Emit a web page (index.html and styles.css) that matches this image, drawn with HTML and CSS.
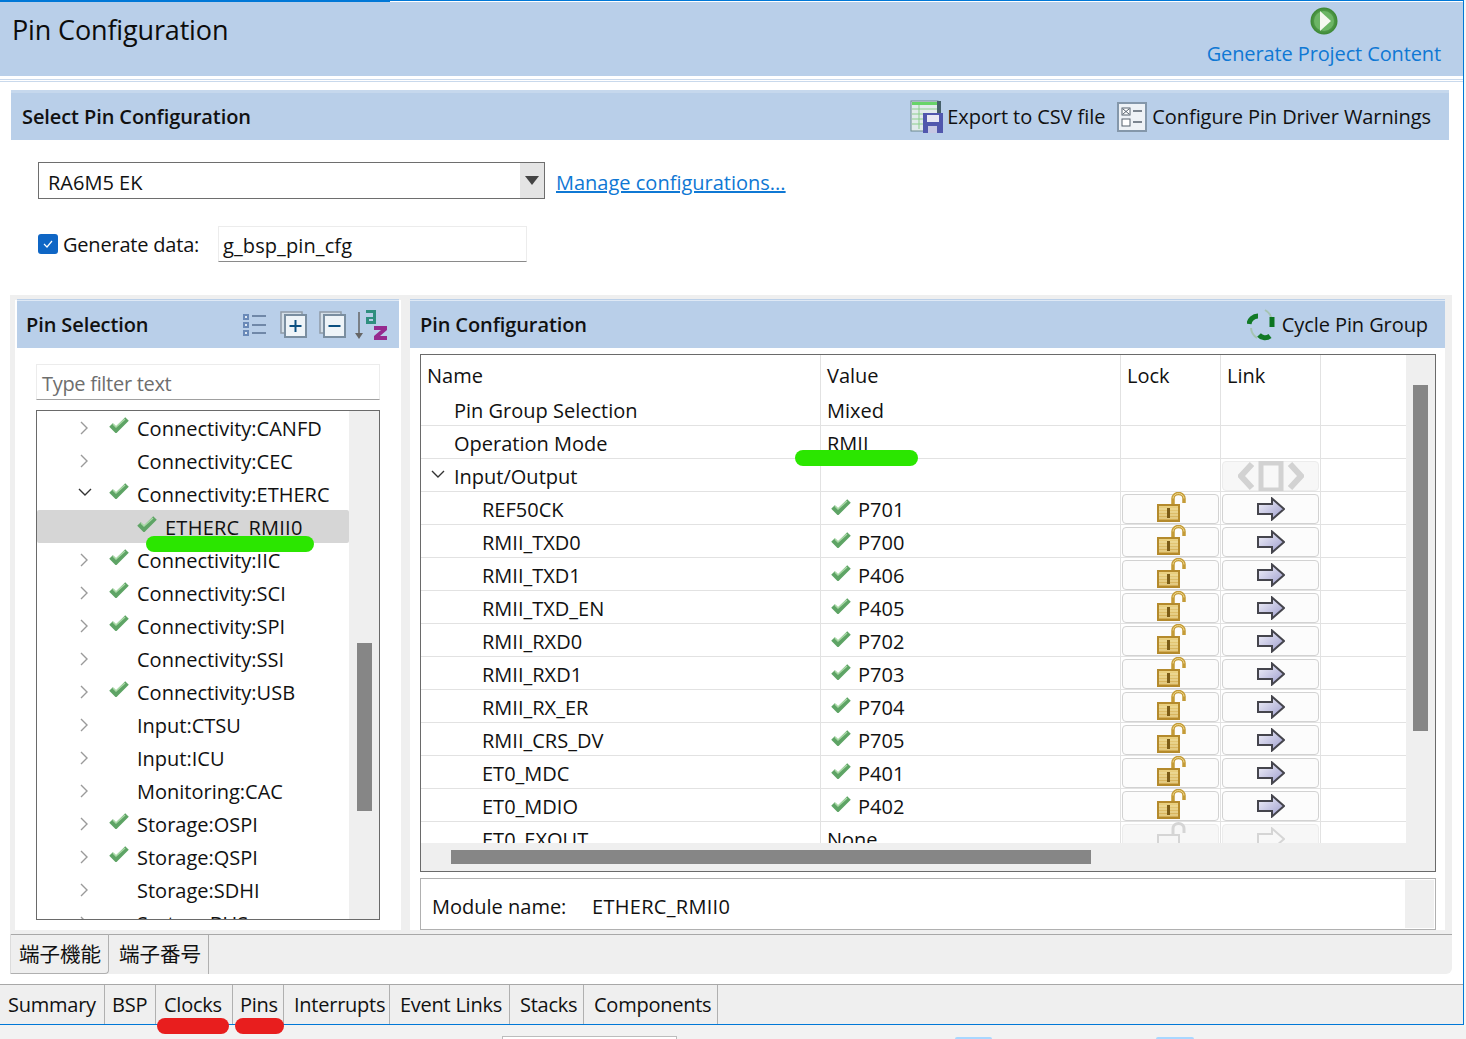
FILE: index.html
```html
<!DOCTYPE html>
<html lang="en">
<head>
<meta charset="utf-8">
<title>Pin Configuration</title>
<link rel="stylesheet" href="styles.css">
</head>
<body>
<svg class="defs" width="0" height="0" aria-hidden="true">
  <defs>
    <linearGradient id="arrowFill" x1="0" y1="0" x2="1" y2="1"><stop offset="0" stop-color="#f4f4fb"/><stop offset="1" stop-color="#9c9ccd"/></linearGradient>
    <linearGradient id="lockFill" x1="0" y1="0" x2="0" y2="1"><stop offset="0" stop-color="#ecd485"/><stop offset="1" stop-color="#d0a950"/></linearGradient>
    <radialGradient id="playFill"><stop offset="0" stop-color="#8ccc84"/><stop offset="1" stop-color="#3b8733"/></radialGradient>
    <symbol id="i-check" viewBox="0 0 20 16"><path d="M2 8l5 5L18 2" fill="none" stroke="#5ea465" stroke-width="5"/><path d="M4 7l3 3 9-8" fill="none" stroke="#a9d9a6" stroke-width="1.500"/></symbol>
    <symbol id="i-right" viewBox="0 0 10 16"><path d="M2 2l6 6-6 6" fill="none" stroke="#9a9a9a" stroke-width="1.400"/></symbol>
    <symbol id="i-down" viewBox="0 0 16 10"><path d="M2 2l6 6 6-6" fill="none" stroke="#333" stroke-width="1.400"/></symbol>
    <symbol id="i-lock" viewBox="0 0 30 30"><path d="M16 13V6.500a5.500 5 0 0 1 11 0V11" fill="none" stroke="#c49b36" stroke-width="3.500"/><path d="M16 6.500a5.500 5 0 0 1 11 0" fill="none" stroke="#efd98f"/><rect x="1" y="13" width="21" height="16" fill="url(#lockFill)" stroke="#b48a2c" stroke-width="2"/><path d="M2 17h19M2 20h19M2 23h19M2 26h19" stroke="#f2e3a8"/><rect x="10" y="16" width="3" height="10" fill="#7b5c16"/></symbol>
    <symbol id="i-arrow" viewBox="0 0 28 24"><path d="M1 7h14V1.500L27 12 15 22.500V17H1z" fill="url(#arrowFill)" stroke="#45454d" stroke-width="2"/></symbol>
    <symbol id="i-lock-off" viewBox="0 0 30 30"><path d="M16 13V6.500a5.500 5 0 0 1 11 0V11" fill="none" stroke="#d5d5d5" stroke-width="3"/><rect x="1" y="13" width="21" height="16" fill="#f6f6f6" stroke="#d5d5d5" stroke-width="2"/></symbol>
    <symbol id="i-arrow-off" viewBox="0 0 28 24"><path d="M1 7h14V1.500L27 12 15 22.500V17H1z" fill="#f8f8f8" stroke="#d5d5d5" stroke-width="2"/></symbol>
  </defs>
</svg>

<div class="window">
  <div class="progress"></div>
  <header class="page-head">
    <h1 class="page-title">Pin Configuration</h1>
    <div class="generate">
      <svg class="play" width="28" height="28" viewBox="0 0 28 28"><circle cx="14" cy="14" r="13.500" fill="url(#playFill)"/><circle cx="14" cy="14" r="10" fill="#6cb565"/><path d="M10 4l11 10-11 10z" fill="#f6f8f0"/></svg>
      <a class="generate-link">Generate Project Content</a>
    </div>
  </header>

  <section class="select-section">
    <div class="bar select-bar">
      <h2 class="bar-title">Select Pin Configuration</h2>
      <div class="bar-actions">
        <span class="action">
          <svg width="33" height="33" viewBox="0 0 33 33"><rect x="1" y="1" width="27" height="30" fill="#e2ebec" stroke="#6d8a90"/><rect x="2" y="2" width="25" height="3" fill="#68d468"/><path d="M2 9h25M2 14h25M2 19h25M2 24h25M9 5v24" stroke="#8ccf8c"/><rect x="27" y="1" width="4" height="13" fill="#46606a"/><rect x="13" y="13" width="20" height="20" fill="#5157ad"/><rect x="17" y="15" width="12" height="7" fill="#e8e8f4"/><rect x="18" y="26" width="9" height="7" fill="#c6c8e4"/></svg>
          Export to CSV file
        </span>
        <span class="action action-wide">
          <svg width="30" height="30" viewBox="0 0 30 30"><rect x="1" y="1" width="28" height="28" fill="#eef2f6" stroke="#8497aa" stroke-width="2"/><rect x="5" y="6" width="8" height="7" fill="#fff" stroke="#55606c"/><path d="M6 7l6 5M12 7l-6 5" stroke="#55606c"/><rect x="5" y="17" width="8" height="7" fill="#fff" stroke="#55606c"/><path d="M16 9h9M16 20h9" stroke="#55606c" stroke-width="1.500"/></svg>
          Configure Pin Driver Warnings
        </span>
      </div>
    </div>
    <div class="config-row">
      <div class="combo"><span class="combo-value">RA6M5 EK</span><span class="combo-btn"><i class="combo-caret"></i></span></div>
      <a class="link">Manage configurations...</a>
    </div>
    <div class="generate-row">
      <span class="checkbox"><svg width="14" height="14" viewBox="0 0 14 14"><path d="M3 7l3 3 5-6" fill="none" stroke="#fff" stroke-width="1.200"/></svg></span>
      <span class="generate-label">Generate data:</span>
      <span class="text-input">g_bsp_pin_cfg</span>
    </div>
  </section>

  <div class="work">
    <div class="panels">
      <section class="panel panel-left">
        <div class="bar panel-bar">
          <h2 class="bar-title">Pin Selection</h2>
          <div class="tools">
            <svg width="24" height="24" viewBox="0 0 24 24"><g fill="#dfe8f2" stroke="#6a8ab8" stroke-width="2"><rect x="1" y="2" width="4" height="4"/><rect x="1" y="10" width="4" height="4"/><rect x="1" y="18" width="4" height="4"/></g><path d="M9 3h14M9 12h14M9 20h14" stroke="#7088a8" stroke-width="2"/></svg>
            <svg width="27" height="27" viewBox="0 0 27 27"><rect x="1" y="1" width="21" height="21" fill="#d4dfe8" stroke="#8e9ba6" stroke-width="1.500"/><rect x="5" y="4" width="21" height="22" fill="#eef4f8" stroke="#7a8ea0" stroke-width="2"/><path d="M15.500 9v12M9.500 15h12" stroke="#0a4f80" stroke-width="2"/></svg>
            <svg class="tool-collapse" width="27" height="27" viewBox="0 0 27 27"><rect x="1" y="1" width="21" height="21" fill="#d4dfe8" stroke="#8e9ba6" stroke-width="1.500"/><rect x="5" y="4" width="21" height="22" fill="#eef4f8" stroke="#7a8ea0" stroke-width="2"/><path d="M9.500 15h12" stroke="#0a4f80" stroke-width="2"/></svg>
            <svg class="tool-sort" width="33" height="32" viewBox="0 0 33 32"><path d="M5 3v24" stroke="#666" stroke-width="1.500"/><path d="M1 24h8l-4 6z" fill="#666"/><path d="M12 1h10v14h-10v-7h7V4h-7zM15 10v2h4v-2z" fill="#2f8f7f" fill-rule="evenodd"/><path d="M20 17h13v4l-7 6h7v4H20v-4l7-6h-7z" fill="#962a8f"/></svg>
          </div>
        </div>
        <div class="filter">Type filter text</div>
        <div class="tree">
          <div class="tree-rows">
            <div class="tree-row"><span class="chev"><svg width="10" height="16"><use href="#i-right"/></svg></span><span class="chk"><svg width="20" height="16"><use href="#i-check"/></svg></span>Connectivity:CANFD</div>
            <div class="tree-row"><span class="chev"><svg width="10" height="16"><use href="#i-right"/></svg></span><span class="chk"></span>Connectivity:CEC</div>
            <div class="tree-row"><span class="chev chev-open"><svg width="16" height="10"><use href="#i-down"/></svg></span><span class="chk"><svg width="20" height="16"><use href="#i-check"/></svg></span>Connectivity:ETHERC</div>
            <div class="tree-row tree-child"><span class="chk"><svg width="20" height="16"><use href="#i-check"/></svg></span>ETHERC_RMII0</div>
            <div class="tree-row"><span class="chev"><svg width="10" height="16"><use href="#i-right"/></svg></span><span class="chk"><svg width="20" height="16"><use href="#i-check"/></svg></span>Connectivity:IIC</div>
            <div class="tree-row"><span class="chev"><svg width="10" height="16"><use href="#i-right"/></svg></span><span class="chk"><svg width="20" height="16"><use href="#i-check"/></svg></span>Connectivity:SCI</div>
            <div class="tree-row"><span class="chev"><svg width="10" height="16"><use href="#i-right"/></svg></span><span class="chk"><svg width="20" height="16"><use href="#i-check"/></svg></span>Connectivity:SPI</div>
            <div class="tree-row"><span class="chev"><svg width="10" height="16"><use href="#i-right"/></svg></span><span class="chk"></span>Connectivity:SSI</div>
            <div class="tree-row"><span class="chev"><svg width="10" height="16"><use href="#i-right"/></svg></span><span class="chk"><svg width="20" height="16"><use href="#i-check"/></svg></span>Connectivity:USB</div>
            <div class="tree-row"><span class="chev"><svg width="10" height="16"><use href="#i-right"/></svg></span><span class="chk"></span>Input:CTSU</div>
            <div class="tree-row"><span class="chev"><svg width="10" height="16"><use href="#i-right"/></svg></span><span class="chk"></span>Input:ICU</div>
            <div class="tree-row"><span class="chev"><svg width="10" height="16"><use href="#i-right"/></svg></span><span class="chk"></span>Monitoring:CAC</div>
            <div class="tree-row"><span class="chev"><svg width="10" height="16"><use href="#i-right"/></svg></span><span class="chk"><svg width="20" height="16"><use href="#i-check"/></svg></span>Storage:OSPI</div>
            <div class="tree-row"><span class="chev"><svg width="10" height="16"><use href="#i-right"/></svg></span><span class="chk"><svg width="20" height="16"><use href="#i-check"/></svg></span>Storage:QSPI</div>
            <div class="tree-row"><span class="chev"><svg width="10" height="16"><use href="#i-right"/></svg></span><span class="chk"></span>Storage:SDHI</div>
            <div class="tree-row"><span class="chev"><svg width="10" height="16"><use href="#i-right"/></svg></span><span class="chk"></span>System:BUS</div>
          </div>
          <div class="vscroll tree-scroll"><i class="thumb tree-thumb"></i></div>
        </div>
      </section>

      <section class="panel panel-right">
        <div class="bar panel-bar panel-bar-right">
          <h2 class="bar-title">Pin Configuration</h2>
          <span class="action">
            <svg width="31" height="32" viewBox="0 0 31 32"><path d="M2 15a9 9 0 0 1 9-8" fill="none" stroke="#127a27" stroke-width="5"/><path d="M18 1a14 14 0 0 1 7 12" fill="none" stroke="#a6c4b2" stroke-width="2"/><path d="M25 8v10" stroke="#0b7420" stroke-width="5"/><path d="M12 26a8 8 0 0 0 11 1" fill="none" stroke="#127a27" stroke-width="5"/><path d="M4 19a13 13 0 0 0 6 10" fill="none" stroke="#a6c4b2" stroke-width="2"/></svg>
            Cycle Pin Group
          </span>
        </div>
        <div class="grid-box">
          <div class="grid-main">
            <div class="grid-rows">
              <div class="row row-head"><div class="cell cell-name">Name</div><div class="cell cell-val">Value</div><div class="cell cell-lock cell-text">Lock</div><div class="cell cell-link cell-text">Link</div><div class="cell"></div></div>
              <div class="row"><div class="cell cell-name lvl1">Pin Group Selection</div><div class="cell cell-val">Mixed</div><div class="cell cell-lock"></div><div class="cell cell-link"></div><div class="cell"></div></div>
              <div class="row"><div class="cell cell-name lvl1">Operation Mode</div><div class="cell cell-val">RMII</div><div class="cell cell-lock"></div><div class="cell cell-link"></div><div class="cell"></div></div>
              <div class="row"><div class="cell cell-name lvl1"><svg class="row-chev" width="16" height="10"><use href="#i-down"/></svg>Input/Output</div><div class="cell cell-val"></div><div class="cell cell-lock"></div><div class="cell cell-link"><span class="cell-btn btn-off"><svg width="66" height="30" viewBox="0 0 66 30"><path d="M14 3L3 15l11 12" fill="none" stroke="#d2d2d2" stroke-width="6"/><path d="M52 3l11 12-11 12" fill="none" stroke="#d2d2d2" stroke-width="6"/><rect x="23" y="2" width="20" height="27" fill="#f8f8f8" stroke="#d2d2d2" stroke-width="5"/></svg></span></div><div class="cell"></div></div>
              <div class="row"><div class="cell cell-name lvl2">REF50CK</div><div class="cell cell-val"><svg class="val-chk" width="20" height="16"><use href="#i-check"/></svg>P701</div><div class="cell cell-lock"><span class="cell-btn"><svg class="lock" width="30" height="30"><use href="#i-lock"/></svg></span></div><div class="cell cell-link"><span class="cell-btn"><svg width="28" height="24"><use href="#i-arrow"/></svg></span></div><div class="cell"></div></div>
              <div class="row"><div class="cell cell-name lvl2">RMII_TXD0</div><div class="cell cell-val"><svg class="val-chk" width="20" height="16"><use href="#i-check"/></svg>P700</div><div class="cell cell-lock"><span class="cell-btn"><svg class="lock" width="30" height="30"><use href="#i-lock"/></svg></span></div><div class="cell cell-link"><span class="cell-btn"><svg width="28" height="24"><use href="#i-arrow"/></svg></span></div><div class="cell"></div></div>
              <div class="row"><div class="cell cell-name lvl2">RMII_TXD1</div><div class="cell cell-val"><svg class="val-chk" width="20" height="16"><use href="#i-check"/></svg>P406</div><div class="cell cell-lock"><span class="cell-btn"><svg class="lock" width="30" height="30"><use href="#i-lock"/></svg></span></div><div class="cell cell-link"><span class="cell-btn"><svg width="28" height="24"><use href="#i-arrow"/></svg></span></div><div class="cell"></div></div>
              <div class="row"><div class="cell cell-name lvl2">RMII_TXD_EN</div><div class="cell cell-val"><svg class="val-chk" width="20" height="16"><use href="#i-check"/></svg>P405</div><div class="cell cell-lock"><span class="cell-btn"><svg class="lock" width="30" height="30"><use href="#i-lock"/></svg></span></div><div class="cell cell-link"><span class="cell-btn"><svg width="28" height="24"><use href="#i-arrow"/></svg></span></div><div class="cell"></div></div>
              <div class="row"><div class="cell cell-name lvl2">RMII_RXD0</div><div class="cell cell-val"><svg class="val-chk" width="20" height="16"><use href="#i-check"/></svg>P702</div><div class="cell cell-lock"><span class="cell-btn"><svg class="lock" width="30" height="30"><use href="#i-lock"/></svg></span></div><div class="cell cell-link"><span class="cell-btn"><svg width="28" height="24"><use href="#i-arrow"/></svg></span></div><div class="cell"></div></div>
              <div class="row"><div class="cell cell-name lvl2">RMII_RXD1</div><div class="cell cell-val"><svg class="val-chk" width="20" height="16"><use href="#i-check"/></svg>P703</div><div class="cell cell-lock"><span class="cell-btn"><svg class="lock" width="30" height="30"><use href="#i-lock"/></svg></span></div><div class="cell cell-link"><span class="cell-btn"><svg width="28" height="24"><use href="#i-arrow"/></svg></span></div><div class="cell"></div></div>
              <div class="row"><div class="cell cell-name lvl2">RMII_RX_ER</div><div class="cell cell-val"><svg class="val-chk" width="20" height="16"><use href="#i-check"/></svg>P704</div><div class="cell cell-lock"><span class="cell-btn"><svg class="lock" width="30" height="30"><use href="#i-lock"/></svg></span></div><div class="cell cell-link"><span class="cell-btn"><svg width="28" height="24"><use href="#i-arrow"/></svg></span></div><div class="cell"></div></div>
              <div class="row"><div class="cell cell-name lvl2">RMII_CRS_DV</div><div class="cell cell-val"><svg class="val-chk" width="20" height="16"><use href="#i-check"/></svg>P705</div><div class="cell cell-lock"><span class="cell-btn"><svg class="lock" width="30" height="30"><use href="#i-lock"/></svg></span></div><div class="cell cell-link"><span class="cell-btn"><svg width="28" height="24"><use href="#i-arrow"/></svg></span></div><div class="cell"></div></div>
              <div class="row"><div class="cell cell-name lvl2">ET0_MDC</div><div class="cell cell-val"><svg class="val-chk" width="20" height="16"><use href="#i-check"/></svg>P401</div><div class="cell cell-lock"><span class="cell-btn"><svg class="lock" width="30" height="30"><use href="#i-lock"/></svg></span></div><div class="cell cell-link"><span class="cell-btn"><svg width="28" height="24"><use href="#i-arrow"/></svg></span></div><div class="cell"></div></div>
              <div class="row"><div class="cell cell-name lvl2">ET0_MDIO</div><div class="cell cell-val"><svg class="val-chk" width="20" height="16"><use href="#i-check"/></svg>P402</div><div class="cell cell-lock"><span class="cell-btn"><svg class="lock" width="30" height="30"><use href="#i-lock"/></svg></span></div><div class="cell cell-link"><span class="cell-btn"><svg width="28" height="24"><use href="#i-arrow"/></svg></span></div><div class="cell"></div></div>
              <div class="row"><div class="cell cell-name lvl2">ET0_EXOUT</div><div class="cell cell-val">None</div><div class="cell cell-lock"><span class="cell-btn btn-off"><svg class="lock" width="30" height="30"><use href="#i-lock-off"/></svg></span></div><div class="cell cell-link"><span class="cell-btn btn-off"><svg width="28" height="24"><use href="#i-arrow-off"/></svg></span></div><div class="cell"></div></div>
            </div>
            <div class="vscroll grid-scroll"><i class="thumb grid-thumb"></i></div>
          </div>
          <div class="hscroll"><i class="hthumb"></i></div>
        </div>
        <div class="module-box">
          <div class="module-text"><span class="module-label">Module name:</span><span class="module-value">ETHERC_RMII0</span></div>
          <div class="module-gutter"></div>
        </div>
      </section>
    </div>
    <nav class="sub-tabs">
      <span class="sub-tab sub-tab-active">端子機能</span>
      <span class="sub-tab">端子番号</span>
    </nav>
  </div>

  <nav class="main-tabs">
    <span class="main-tab tab-summary">Summary</span>
    <span class="main-tab tab-bsp">BSP</span>
    <span class="main-tab tab-clocks">Clocks</span>
    <span class="main-tab tab-pins">Pins</span>
    <span class="main-tab tab-int">Interrupts</span>
    <span class="main-tab tab-event">Event Links</span>
    <span class="main-tab tab-stacks">Stacks</span>
    <span class="main-tab tab-comp">Components</span>
  </nav>
</div>
<div class="under">
  <i class="under-box"></i>
  <i class="under-tab under-tab-a"></i>
  <i class="under-tab under-tab-b"></i>
</div>

<i class="mark mark-green mark-mode"></i>
<i class="mark mark-green mark-tree"></i>
<i class="mark mark-red mark-clocks"></i>
<i class="mark mark-red mark-pins"></i>
</body>
</html>
```

FILE: styles.css
```css
* { box-sizing: border-box; }
html, body { margin: 0; padding: 0; }
body {
  width: 1466px;
  height: 1039px;
  overflow: hidden;
  position: relative;
  background: #f6f6f6;
  font-family: "Open Sans", "Noto Sans", "Noto Sans CJK JP", sans-serif;
  font-size: 20px;
  color: #111;
}
.defs { position: absolute; }
svg { display: block; flex: none; }
h1, h2 { margin: 0; font: inherit; }

.window {
  width: 1464px;
  height: 1025px;
  background: #fff;
  border-top: 1px solid #0078d7;
  border-right: 1px solid #0078d7;
  border-bottom: 1px solid #0078d7;
  display: flex;
  flex-direction: column;
}
.progress { width: 390px; height: 1px; background: #0078d7; flex: none; }
.page-head {
  height: 74px;
  flex: none;
  background: #b9cfe9;
  display: flex;
  justify-content: space-between;
  padding: 0 22px 0 12px;
}
.page-title { font-size: 27px; line-height: 56px; letter-spacing: -0.15px; color: #0c0c0c; }
.generate { display: flex; flex-direction: column; align-items: center; padding-top: 5px; }
.play { margin-bottom: 5px; }
.generate-link { color: #0f78d4; line-height: 27px; letter-spacing: -0.12px; }

.select-section {
  margin-top: 3px;
  border-top: 1px solid #c9d9ec;
  padding-top: 2px;
  flex: none;
  height: 216px;
  position: relative;
}
.select-section::before {
  content: "";
  display: block;
  height: 1px;
  background: #c9d9ec;
  margin-bottom: 8px;
  margin-top: -1px;
}
.bar {
  background: #b9cfe9;
  display: flex;
  align-items: center;
  justify-content: space-between;
}
.select-bar {
  margin: 0 14px 0 11px;
  height: 50px;
  padding: 0 18px 0 11px;
  border-top: 3px solid #c6d8ed;
}
.bar-title { font-weight: 600; letter-spacing: -0.1px; }
.bar-actions { display: flex; gap: 12px; }
.action { display: flex; align-items: center; gap: 4px; letter-spacing: -0.08px; }
.action-wide { gap: 5px; }
.config-row {
  display: flex;
  align-items: center;
  gap: 11px;
  margin: 22px 0 0 38px;
}
.combo {
  width: 507px;
  height: 37px;
  border: 1px solid #6e6e6e;
  display: flex;
  justify-content: space-between;
  align-items: center;
  padding-left: 9px;
}
.combo-value { padding-top: 3px; }
.combo-btn { width: 24px; height: 35px; background: #e4e4e4; display: flex; align-items: center; justify-content: center; }
.combo-caret { width: 0; height: 0; border: 7px solid transparent; border-top: 9px solid #444; border-bottom: 0; }
.link { color: #0f78d4; text-decoration: underline; padding-top: 3px; }
.generate-row { display: flex; align-items: center; margin: 27px 0 0 38px; }
.checkbox {
  width: 20px; height: 20px;
  background: #0f66c5;
  border-radius: 3px;
  display: flex; align-items: center; justify-content: center;
}
.generate-label { margin-left: 5px; width: 155px; padding-top: 1px; letter-spacing: -0.2px; }
.text-input {
  width: 309px; height: 36px;
  border: 1px solid #ececec;
  border-bottom-color: #8a8a8a;
  padding-left: 4px;
  line-height: 38px;
  letter-spacing: 0.1px;
}

.work {
  flex: none;
  height: 679px;
  margin: 0 11px 0 10px;
  background: #efefef;
  border-bottom-right-radius: 6px;
  display: flex;
  flex-direction: column;
}
.panels {
  height: 635px;
  flex: none;
  display: flex;
  gap: 9px;
  padding: 5px 7px 0 5px;
}
.panel { background: #fff; display: flex; flex-direction: column; }
.panel-left { width: 386px; padding: 0 2px; }
.panel-right { width: 1035px; }
.panel-bar {
  height: 48px;
  padding: 0 12px 0 9px;
  flex: none;
  border-top: 1px solid #dfe9f5;
  box-shadow: 0 -1px 0 #bdd1e9;
}
.panel-bar-right { padding: 0 17px 0 10px; }
.tools { display: flex; align-items: center; gap: 13px; }
.tool-collapse { margin-left: -1px; }
.tool-sort { margin-left: -5px; }
.filter {
  flex: none;
  margin: 16px 19px 0 19px;
  height: 36px;
  border: 1px solid #ececec;
  border-bottom-color: #a0a0a0;
  padding-left: 5px;
  line-height: 38px;
  color: #6e6e6e;
  letter-spacing: -0.3px;
}
.tree {
  flex: none;
  margin: 10px 19px 0 19px;
  height: 510px;
  border: 1px solid #6a6a6a;
  display: flex;
  overflow: hidden;
}
.tree-rows { width: 312px; flex: none; }
.tree-row {
  height: 33px;
  line-height: 33px;
  display: flex;
  align-items: center;
  padding-top: 2px;
  padding-left: 40px;
  white-space: nowrap;
}
.chev { width: 32px; flex: none; padding-left: 2px; margin-top: -2px; }
.chev-open { padding-left: 0; margin-top: -6px; }
.chk { width: 28px; flex: none; margin-top: -7px; }
.tree-child { padding-left: 100px; background: #d6d6d6; border-radius: 2px; letter-spacing: 0.25px; }
.vscroll { background: #efefef; flex: none; position: relative; }
.tree-scroll { width: 30px; }
.thumb { position: absolute; background: #868686; width: 15px; display: block; }
.tree-thumb { left: 8px; top: 232px; height: 168px; }

.grid-box {
  flex: none;
  margin: 6px 9px 0 10px;
  height: 518px;
  border: 1px solid #6a6a6a;
  background: #efefef;
  display: flex;
  flex-direction: column;
}
.grid-main { height: 488px; flex: none; display: flex; overflow: hidden; }
.grid-rows { width: 985px; flex: none; background: #fff; overflow: hidden; }
.grid-scroll { flex: 1; }
.grid-thumb { left: 7px; top: 30px; height: 346px; }
.hscroll { flex: 1; position: relative; }
.hthumb { position: absolute; display: block; left: 30px; top: 7px; width: 640px; height: 14px; background: #868686; }
.row {
  display: grid;
  grid-template-columns: 400px 300px 100px 100px 85px;
  height: 33px;
  border-bottom: 1px solid #e2e2e2;
}
.row-head { height: 38px; border-bottom: 0; }
.cell { border-right: 1px solid #e2e2e2; line-height: 35px; white-space: nowrap; position: relative; }
.cell:last-child { border-right: 0; }
.cell-name { padding-left: 6px; }
.row-head .cell { line-height: 42px; }
.cell-val { padding-left: 6px; display: flex; align-items: flex-start; }
.cell-text { padding-left: 6px; }
.lvl1 { padding-left: 33px; }
.lvl2 { padding-left: 61px; }
.row-chev { position: absolute; left: 9px; top: 10px; }
.val-chk { margin: 7px 7px 0 4px; }
.cell-btn {
  display: flex;
  align-items: center;
  justify-content: center;
  height: 30px;
  margin: 2px 1px 0;
  border: 1px solid #d2d2d2;
  border-radius: 4px;
  background: #fcfcfc;
}
.btn-off { border-color: #ececec; background: #f7f7f7; }
.lock { transform: translate(1px, -2px); }

.module-box {
  flex: none;
  margin: 6px 9px 0 10px;
  height: 52px;
  border: 1px solid #b0b0b0;
  display: flex;
  justify-content: space-between;
  padding: 1px;
}
.module-text { padding-left: 10px; line-height: 54px; display: flex; }
.module-label { width: 160px; }
.module-value { letter-spacing: 0.3px; }
.module-gutter { width: 29px; background: #efefef; }

.sub-tabs {
  flex: none;
  margin: 4px 0 0 0;
  height: 40px;
  border-top: 1px solid #a8a8a8;
  display: flex;
  align-items: stretch;
}
.sub-tab {
  display: block;
  padding: 0 10px;
  line-height: 38px;
  font-size: 20.500px;
  border-right: 1px solid #b0b0b0;
  width: 100px;
  white-space: nowrap;
}
.sub-tab-active { width: 99px; padding-left: 8px; margin-top: -1px; line-height: 40px; border-bottom: 1px solid #b0b0b0; border-left: 1px solid #dcdcdc; border-bottom-right-radius: 4px; }

.main-tabs {
  flex: none;
  margin-top: 10px;
  height: 40px;
  background: #efefef;
  border-top: 1px solid #a8a8a8;
  display: flex;
}
.main-tab {
  display: block;
  line-height: 39px;
  padding-left: 8px;
  border-right: 1px solid #b0b0b0;
  white-space: nowrap;
  letter-spacing: -0.25px;
}
.tab-summary { width: 105px; }
.tab-bsp { width: 51px; padding-left: 7px; }
.tab-clocks { width: 77px; }
.tab-pins { width: 51px; padding-left: 7px; }
.tab-int { width: 106px; padding-left: 10px; }
.tab-event { width: 120px; padding-left: 10px; }
.tab-stacks { width: 74px; padding-left: 10px; }
.tab-comp { width: 134px; padding-left: 10px; }

.under { height: 14px; position: relative; background: #f2f2f2; }
.under-box { position: absolute; left: 502px; top: 11px; width: 175px; height: 4px; background: #fff; border: 1px solid #bcbcbc; }
.under-tab { position: absolute; top: 12px; height: 3px; background: #a9d7ff; border-radius: 2px 2px 0 0; }
.under-tab-a { left: 955px; width: 37px; }
.under-tab-b { left: 1156px; width: 38px; }

.mark { position: absolute; display: block; height: 16px; border-radius: 8px; }
.mark-green { background: #2be600; }
.mark-red { background: #e81e1e; }
.mark-mode { left: 795px; top: 450px; width: 123px; }
.mark-tree { left: 146px; top: 536px; width: 168px; }
.mark-clocks { left: 157px; top: 1018px; width: 72px; }
.mark-pins { left: 235px; top: 1018px; width: 49px; }
```
